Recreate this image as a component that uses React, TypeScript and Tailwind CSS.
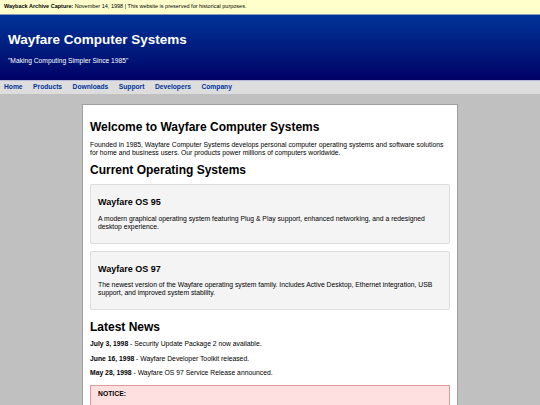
const navLinks = ["Home", "Products", "Downloads", "Support", "Developers", "Company"];

const products = [
  {
    name: "Wayfare OS 95",
    text: "A modern graphical operating system featuring Plug & Play support, enhanced networking, and a redesigned desktop experience.",
  },
  {
    name: "Wayfare OS 97",
    text: "The newest version of the Wayfare operating system family. Includes Active Desktop, Ethernet integration, USB support, and improved system stability.",
  },
];

const news = [
  { date: "July 3, 1998", text: "Security Update Package 2 now available." },
  { date: "June 16, 1998", text: "Wayfare Developer Toolkit released." },
  { date: "May 28, 1998", text: "Wayfare OS 97 Service Release announced." },
];

export default function App() {
  return (
    <div className="min-h-[405px] bg-[#c0c0c0] font-['Liberation_Sans',Arial,sans-serif] text-black">
      {/* archive banner */}
      <div className="flex h-[15px] items-center border-b border-[#8a9ab0] bg-[#ffffcc] px-[4px] text-[5.5px] leading-none">
        <span className="font-bold">Wayback Archive Capture:</span>
        <span>&nbsp;November 14, 1998 | This website is preserved for historical purposes.</span>
      </div>

      <header className="h-[65px] bg-gradient-to-b from-[#003399] to-[#000066] px-[8px] pt-[17px] text-white">
        <h1 className="text-[13.5px] font-bold leading-[16px]">Wayfare Computer Systems</h1>
        <p className="mt-[8px] text-[6.7px] leading-[9px]">"Making Computing Simpler Since 1985"</p>
      </header>

      <nav className="flex h-[14px] items-center gap-[10.5px] border-t border-[#b8b8d8] bg-[#dddddd] px-[4px]">
        {navLinks.map((link) => (
          <a key={link} className="text-[6.7px] font-bold leading-none text-[#003399]">
            {link}
          </a>
        ))}
      </nav>

      <main className="pt-[10px]">
        <div className="mx-auto w-[376px] border border-[#a0a0a0] bg-white px-[7px] pt-[15px] pb-[20px]">
          <h2 className="text-[12px] font-bold leading-[14px]">Welcome to Wayfare Computer Systems</h2>
          <p className="mt-[7px] text-[6.8px] leading-[8px]">
            Founded in 1985, Wayfare Computer Systems develops personal computer operating systems and software solutions for home and business users. Our products power millions of computers worldwide.
          </p>

          <h2 className="mt-[6px] text-[12px] font-bold leading-[14px]">Current Operating Systems</h2>
          <div className="mt-[7px] flex flex-col gap-[7px]">
            {products.map((p) => (
              <div key={p.name} className="rounded-[2px] border border-[#dddddd] bg-[#f4f4f4] px-[7px] pt-[12px] pb-[12px]">
                <h3 className="text-[9px] font-bold leading-[11px]">{p.name}</h3>
                <p className="mt-[6.5px] text-[6.8px] leading-[8px]">{p.text}</p>
              </div>
            ))}
          </div>

          <h2 className="mt-[10px] text-[12px] font-bold leading-[14px]">Latest News</h2>
          <div className="mt-[6px] flex flex-col gap-[6.5px]">
            {news.map((n) => (
              <p key={n.date} className="text-[6.8px] leading-[8px]">
                <span className="font-bold">{n.date}</span> - {n.text}
              </p>
            ))}
          </div>

          <div className="mt-[8px] border border-[#e09a9a] bg-[#ffe0e0] px-[7px] pt-[4px] pb-[10px]">
            <p className="text-[6.8px] font-bold leading-[8px]">NOTICE:</p>
          </div>
        </div>
      </main>
    </div>
  );
}
